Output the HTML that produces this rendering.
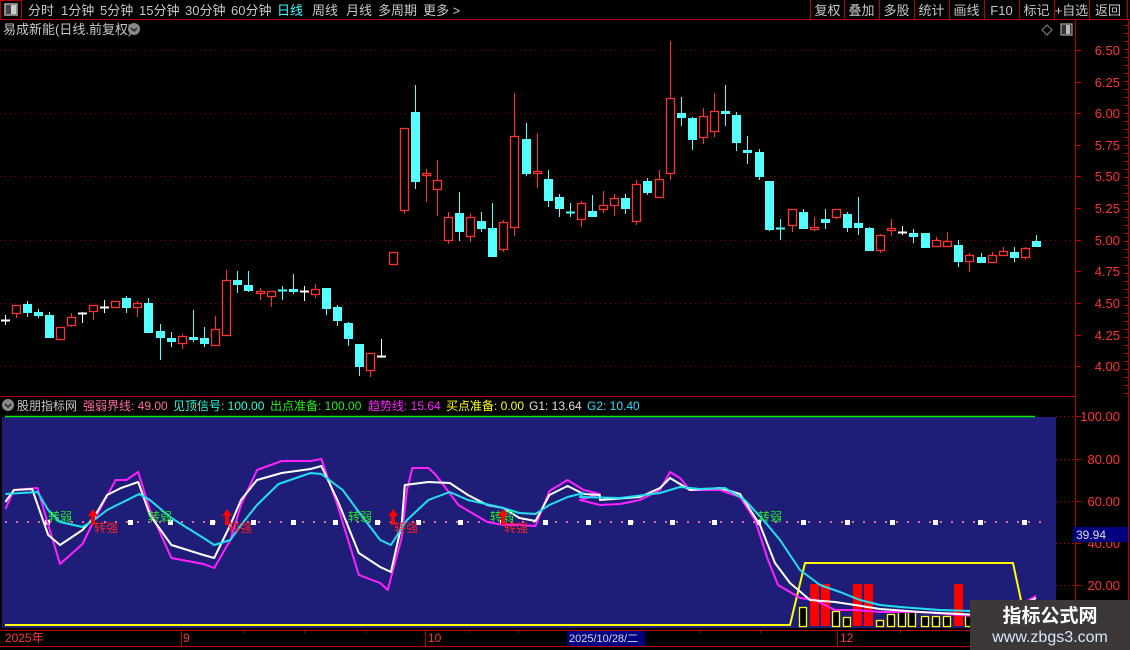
<!DOCTYPE html>
<html><head><meta charset="utf-8"><style>
html,body{margin:0;padding:0;background:#000;width:1130px;height:650px;overflow:hidden;font-family:"Liberation Sans","Noto Sans CJK SC",sans-serif;}
svg{position:absolute;left:0;top:0}
text{font-family:"Liberation Sans","Noto Sans CJK SC",sans-serif}
</style></head><body>
<svg id="s" width="1130" height="650" xmlns="http://www.w3.org/2000/svg"></svg>
<script>
var s=document.getElementById('s'),h='';
function R(x,y,w,hh,f,st,sw){h+='<rect x="'+x+'" y="'+y+'" width="'+w+'" height="'+hh+'" fill="'+(f||'none')+'"'+(st?' stroke="'+st+'" stroke-width="'+(sw||1)+'"':'')+'/>';}
function L(x1,y1,x2,y2,c,w,d){h+='<line x1="'+x1+'" y1="'+y1+'" x2="'+x2+'" y2="'+y2+'" stroke="'+c+'" stroke-width="'+(w||1)+'"'+(d?' stroke-dasharray="'+d+'"':'')+'/>';}
function T(x,y,t,c,sz,a,wt){h+='<text x="'+x+'" y="'+y+'" fill="'+c+'" font-size="'+(sz||12)+'"'+(a?' text-anchor="'+a+'"':'')+(wt?' font-weight="'+wt+'"':'')+'>'+t+'</text>';}
R(0.5,0.5,21,19,'none','#c00000');
R(5,4,12,11,'#444','#aaa',1.5);R(11,5,5,9,'#ccc');
L(0,19.5,1130,19.5,'#c00000');
var m=[['分时',28],['1分钟',61],['5分钟',100],['15分钟',139],['30分钟',185],['60分钟',231],['日线',277],['周线',312],['月线',346],['多周期',378],['更多 &gt;',423]];
m.forEach(function(a){T(a[1],15,a[0],a[0]=='日线'?'#33ffff':'#c8c8c8',13);});
var b=[['复权',810],['叠加',844],['多股',879],['统计',914],['画线',949],['F10',984],['标记',1019],['+自选',1054],['返回',1089]];
b.forEach(function(a,i){L(a[1]+.5,0,a[1]+.5,19,'#c00000');T(a[1]+(i<8?35:38)/2,15,a[0],'#c8c8c8',13,'middle');});
L(1127.5,0,1127.5,19,'#c00000');
T(3,34,'易成新能(日线.前复权)','#c8c8c8',13);
h+='<circle cx="134" cy="29" r="6" fill="#888"/><path d="M131 28 L134 31 L137 28" stroke="#222" stroke-width="1.5" fill="none"/>';
h+='<path d="M1047 25 L1052 30 L1047 35 L1042 30Z" stroke="#888" fill="none"/>';
R(1061,24,11,11,'#333','#999',1.3);R(1066,25,4,9,'#bbb');
L(1075.5,20,1075.5,646,'#c00000');L(1128.5,20,1128.5,646,'#c00000');
var pl=[[6.5,50],[6.25,82],[6.0,113],[5.75,145],[5.5,176],[5.25,208],[5.0,240],[4.75,271],[4.5,303],[4.25,335],[4.0,366]];
pl.forEach(function(p,i){L(1075,p[1]+.5,1081,p[1]+.5,'#c00000');T(1120,p[1]+5,p[0].toFixed(2),'#ff3333',13,'end');if(i%2==0)L(0,p[1]+.5,1075,p[1]+.5,'#900000',1,'1 4');});
for(var y=25;y<395;y+=8){L(1124,y+.5,1128,y+.5,'#c00000');}
var C=[[5,320,320,315,325,'w'],[16,305,313,305,318,'r'],[27,304,312,301,317,'c'],[38,312,315,309,318,'c'],[49,315,337,312,338,'c'],[60,327,339,327,340,'r'],[71,317,325,313,327,'r'],[82,313,313,312,323,'w'],[93,305,311,305,320,'r'],[104,307,307,300,313,'w'],[115,301,307,301,307,'r'],[126,298,307,296,313,'c'],[137,303,307,301,317,'r'],[148,303,332,298,332,'c'],[160,331,337,324,360,'c'],[171,338,341,332,347,'c'],[182,336,343,334,349,'r'],[193,337,339,310,342,'c'],[204,338,343,327,347,'c'],[215,329,345,316,345,'r'],[226,280,335,270,335,'r'],[237,280,284,271,293,'c'],[248,285,290,271,292,'c'],[260,291,293,288,300,'r'],[271,291,296,291,307,'r'],[282,290,291,286,300,'c'],[293,289,291,274,294,'c'],[304,291,291,286,301,'w'],[315,289,294,284,298,'r'],[326,288,308,288,315,'c'],[337,307,320,305,326,'c'],[348,323,338,322,346,'c'],[359,344,366,344,376,'c'],[370,353,370,353,377,'r'],[381,356,356,339,358,'w'],[393,252,264,252,264,'r'],[404,128,210,128,214,'r'],[415,112,181,85,189,'c'],[426,173,175,169,202,'r'],[437,180,189,160,216,'r'],[448,217,240,212,244,'r'],[459,213,231,192,241,'c'],[470,217,236,213,242,'r'],[481,221,228,212,232,'c'],[492,228,256,203,256,'c'],[503,222,249,220,252,'r'],[514,136,227,93,236,'r'],[526,139,173,123,176,'c'],[537,171,173,133,188,'r'],[548,179,200,170,207,'c'],[559,197,208,194,217,'c'],[570,212,212,203,217,'c'],[581,203,219,201,227,'r'],[592,211,216,195,216,'c'],[603,205,209,191,213,'r'],[614,198,205,194,216,'r'],[625,198,208,194,214,'c'],[636,184,221,180,225,'r'],[647,181,192,178,195,'c'],[659,179,197,170,197,'r'],[670,98,173,41,180,'r'],[681,113,117,97,126,'c'],[692,118,139,117,150,'c'],[703,116,137,108,144,'r'],[714,111,131,93,137,'r'],[725,111,113,85,126,'c'],[736,115,142,112,151,'c'],[747,150,152,136,164,'c'],[759,152,176,149,180,'c'],[769,181,229,181,231,'c'],[780,228,229,219,240,'c'],[792,209,225,209,232,'r'],[803,212,228,209,229,'c'],[814,227,229,217,231,'r'],[825,219,222,209,229,'c'],[836,209,217,209,219,'r'],[847,214,227,212,232,'c'],[858,223,227,197,235,'c'],[869,228,250,227,250,'c'],[880,235,250,234,253,'r'],[891,228,230,219,236,'r'],[902,232,232,226,235,'w'],[913,233,236,229,243,'c'],[925,233,247,233,248,'c'],[936,240,246,237,247,'r'],[947,241,246,232,247,'r'],[958,245,261,240,267,'c'],[969,255,261,253,272,'r'],[981,257,262,253,262,'c'],[992,255,262,252,262,'r'],[1003,251,255,247,256,'r'],[1014,252,257,247,262,'c'],[1025,248,257,247,260,'r'],[1036,241,246,235,246,'c']];
C.forEach(function(c){var col=c[5]=='r'?'#ff3232':c[5]=='c'?'#54ffff':'#ffffff';
L(c[0]+.5,c[3],c[0]+.5,c[4],col);
if(c[2]-c[1]<2){L(c[0]-4,c[1]+.5,c[0]+5,c[1]+.5,col,2);}
else if(c[5]=='r'){R(c[0]-3.5,c[1]+.5,8,c[2]-c[1],'#000',col,1.3);}
else R(c[0]-4,c[1],9,c[2]-c[1]+1,col);});
L(0,396.5,1075,396.5,'#c00000');
h+='<circle cx="8" cy="405" r="6" fill="#888"/><path d="M5 404 L8 407 L11 404" stroke="#222" stroke-width="1.5" fill="none"/>';
var ih=[['股朋指标网',17,'#c8c8c8'],['强弱界线: 49.00',83,'#ff6ea0'],['见顶信号: 100.00',173,'#33ffdd'],['出点准备: 100.00',270,'#22ee22'],['趋势线: 15.64',368,'#ff22ff'],['买点准备: 0.00',446,'#ffff22'],['G1: 13.64',529,'#e0e0e0'],['G2: 10.40',587,'#33ddff']];
ih.forEach(function(a){T(a[1],410,a[0],a[2],12);});
R(2,417,1054,211,'#1e1e78');
L(5,416.5,1035,416.5,'#00ee00',1.5);
var il=[[100,416],[80,459],[60,501],[40,543],[20,585]];
il.forEach(function(p){L(1056,p[1]+.5,1075,p[1]+.5,'#c00000',1,'1 3');L(1075,p[1]+.5,1081,p[1]+.5,'#c00000');T(1120,p[1]+5,p[0].toFixed(2),'#ff3333',13,'end');});
for(var x=5;x<1040;x+=11){R(x,521,2,2,'#e07090');}
[47,130,170,212,253,293,335,377,418,460,502,545,588,630,672,714,758,803,847,892,935,980,1024].forEach(function(x){R(x-2,520,5,5,'#fff');});
function P(pts,col,w,sc){var d=pts.map(function(p){var x=p[0];if(sc&&x<=560)x=x*1.071;return x.toFixed(1)+','+p[1];}).join(' ');h+='<polyline points="'+d+'" fill="none" stroke="'+col+'" stroke-width="'+w+'" stroke-linejoin="round"/>';}
P([[5,625],[790,625],[805,563],[1013,563],[1022,605],[1030,610]],'#ffff00',2);
var bars=[[799,607,'y'],[810,584,'r'],[821,584,'r'],[832,611,'y'],[843,617,'y'],[853,584,'r'],[864,584,'r'],[876,620,'y'],[887,614,'y'],[898,611,'y'],[908,611,'y'],[921,616,'y'],[932,616,'y'],[943,616,'y'],[954,584,'r'],[965,614,'y']];
bars.forEach(function(b){if(b[2]=='r')R(b[0],b[1],9,626-b[1],'#ff0000');else R(b[0]+.5,b[1]+.5,7,626-b[1],'#000','#ffff00',1.3);});
P([[5,509],[13,490],[35,488],[45,525],[56,564],[77,544],[88,520],[108,480],[118,480],[129,472],[140,510],[160,558],[190,564],[200,568],[215,540],[225,505],[240,470],[263,461],[290,461],[300,459],[315,505],[335,575],[355,583],[362,590],[375,538],[380,490],[385,468],[400,468],[407,475],[428,505],[455,522],[470,525],[485,525],[500,526],[513,491],[530,480],[545,490],[560,494],[580,500],[600,505],[620,504],[640,500],[660,490],[670,472],[680,478],[690,490],[720,490],[740,497],[755,520],[768,560],[778,585],[790,592],[800,598],[815,600],[835,610],[855,610],[880,612],[920,612],[960,615],[1000,618],[1020,605],[1036,596]],'#ff22ff',2,1);
P([[5,502],[13,490],[30,489],[45,535],[56,545],[77,530],[88,517],[100,495],[113,488],[129,482],[140,515],[160,545],[190,555],[200,558],[215,525],[225,500],[240,480],[263,473],[290,469],[300,466],[315,500],[335,553],[355,567],[365,572],[375,525],[378,485],[400,482],[420,483],[437,495],[455,505],[470,508],[485,518],[500,521],[513,495],[530,486],[545,494],[560,495],[600,500],[640,497],[660,488],[670,478],[690,490],[720,488],[740,494],[760,525],[775,563],[790,583],[810,600],[835,602],[855,605],[880,609],[920,612],[960,614],[1000,616],[1036,598]],'#ffffff',2,1);
P([[5,494],[35,492],[45,510],[56,522],[77,527],[88,520],[100,510],[130,494],[140,500],[160,518],[190,538],[200,545],[215,540],[225,525],[240,505],[260,484],[290,473],[300,474],[320,490],[335,512],[355,540],[365,545],[380,520],[400,500],[420,492],[437,500],[470,508],[485,513],[500,514],[513,505],[530,497],[545,493],[580,497],[620,498],[660,493],[680,487],[700,489],[725,488],[745,500],[765,522],[780,540],[800,570],[820,585],[840,592],[860,600],[880,605],[900,607],[940,610],[1000,612],[1036,604]],'#22e0f0',2,1);
[48,148,348,490,758].forEach(function(x){T(x,521,'转弱','#22ee22',12);});
[93,227,393,503].forEach(function(x){h+='<path d="M'+x+' 509 L'+(x+5)+' 516 L'+(x+2)+' 516 L'+(x+2)+' 525 L'+(x-2)+' 525 L'+(x-2)+' 516 L'+(x-5)+' 516Z" fill="#ff0000"/>';T(x+1,532,'转强','#ff2020',12);});
R(1073,527,55,15,'#000080');T(1076,539,'39.94','#ddd',12);
L(0,630.5,1075,630.5,'#c00000');L(0,646.5,1130,646.5,'#c00000');
T(5,642,'2025年','#ff3333',12);L(181.5,630,181.5,646,'#c00000');T(183,642,'9','#ff3333',12);
L(425.5,630,425.5,646,'#c00000');T(428,642,'10','#ff3333',12);
R(567,631,78,15,'#000080');T(569,642,'2025/10/28/二','#ddd',11);
L(837.5,630,837.5,646,'#c00000');T(840,642,'12','#ff3333',12);
[243,304,365,469,518,700,760,900,1000].forEach(function(x){L(x+.5,630,x+.5,633,'#c00000');});
R(970,600,160,50,'#3c3838');
T(1050,622,'指标公式网','#ffffff',19,'middle','bold');
T(1050,642,'www.zbgs3.com','#d8e8ff',16,'middle');
s.innerHTML=h;
</script>
</body></html>
